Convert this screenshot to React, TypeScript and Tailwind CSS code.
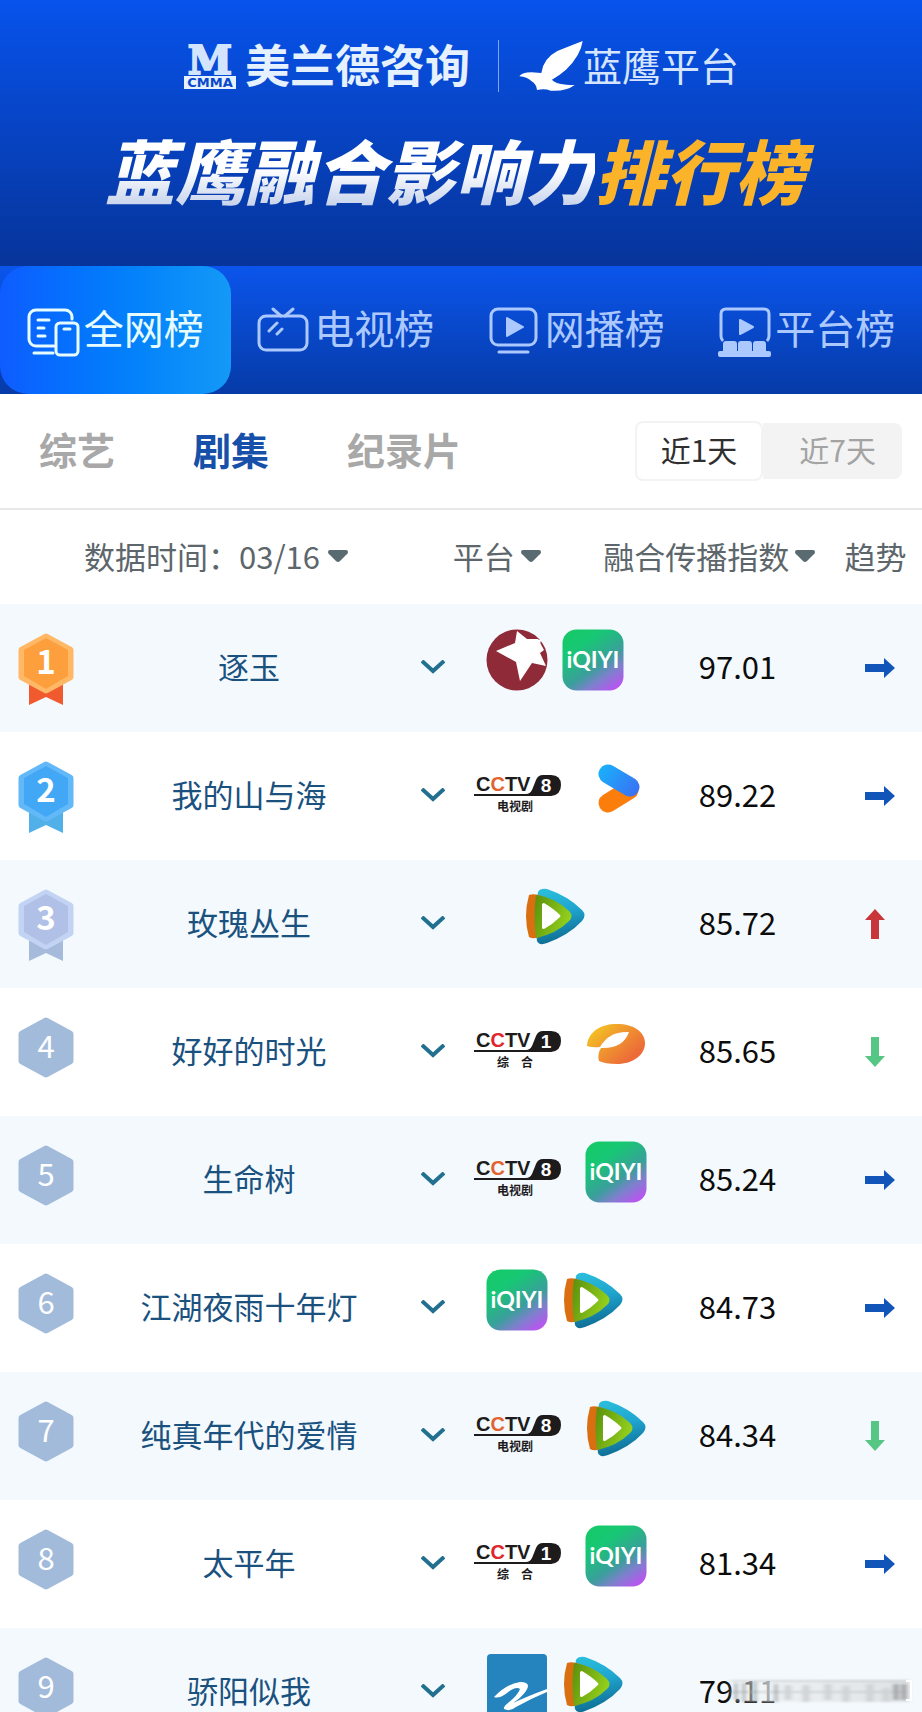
import { useState } from "react";
import type { ReactNode } from "react";
import clsx from "clsx";

type Platform = "dragon" | "iqiyi" | "cctv8" | "cctv1" | "youku" | "tencent" | "hunan" | "zhejiang";
type Trend = "flat" | "up" | "down";

interface Show {
  title: string;
  platforms: Platform[];
  score: string;
  trend?: Trend;
}

const SHOWS: Show[] = [
  { title: "逐玉", platforms: ["dragon", "iqiyi"], score: "97.01", trend: "flat" },
  { title: "我的山与海", platforms: ["cctv8", "youku"], score: "89.22", trend: "flat" },
  { title: "玫瑰丛生", platforms: ["tencent"], score: "85.72", trend: "up" },
  { title: "好好的时光", platforms: ["cctv1", "hunan"], score: "85.65", trend: "down" },
  { title: "生命树", platforms: ["cctv8", "iqiyi"], score: "85.24", trend: "flat" },
  { title: "江湖夜雨十年灯", platforms: ["iqiyi", "tencent"], score: "84.73", trend: "flat" },
  { title: "纯真年代的爱情", platforms: ["cctv8", "tencent"], score: "84.34", trend: "down" },
  { title: "太平年", platforms: ["cctv1", "iqiyi"], score: "81.34", trend: "flat" },
  { title: "骄阳似我", platforms: ["zhejiang", "tencent"], score: "79.11" },
];

/* ---------- brand ---------- */

function CmmaLogo() {
  return (
    <svg width="54" height="60" viewBox="0 -8 54 60" aria-hidden="true">
      <text
        x="27"
        y="30"
        textAnchor="middle"
        fontFamily="DejaVu Serif, serif"
        fontWeight="700"
        fontSize="40"
        fill="#d3e4ff"
        stroke="#d3e4ff"
        strokeWidth="2"
      >
        M
      </text>
      <rect x="1" y="32" width="52" height="13" fill="#e6f1ff" />
      <text x="27" y="43" textAnchor="middle" fontFamily="DejaVu Sans, sans-serif" fontWeight="700" fontSize="13" fill="#0a48cb">
        CMMA
      </text>
    </svg>
  );
}

function EagleLogo() {
  return (
    <svg width="64" height="52" viewBox="55 45 192 156" aria-hidden="true">
      <path
        d="M56 154Q64 142 92 142L122 144Q128 100 170 78Q205 64 246 48Q240 92 196 134Q178 150 154 164Q166 180 222 180Q196 200 150 197Q132 190 109 195Q108 178 92 168Q80 156 56 154Z"
        fill="#fff"
      />
    </svg>
  );
}

/* ---------- tab icons ---------- */

function AllIcon() {
  return (
    <svg width="53" height="50" viewBox="0 0 53 50" fill="none" stroke="currentColor" strokeWidth="3" strokeLinecap="round" aria-hidden="true">
      <path d="M45 12V10a7 7 0 0 0-7-7H9a7 7 0 0 0-7 7v22a7 7 0 0 0 7 7h18" />
      <path d="M11 13h11M11 21h6M11 29h7M7 46h19" />
      <rect x="29" y="16" width="22" height="32" rx="4" />
      <path d="M37 22h6" />
    </svg>
  );
}

function TvIcon() {
  return (
    <svg width="53" height="50" viewBox="0 0 53 50" fill="none" stroke="currentColor" strokeWidth="3" strokeLinecap="round" aria-hidden="true">
      <rect x="2" y="9" width="48" height="34" rx="7" />
      <path d="M16 2l8 7M36 2l-8 7M12 24l8-8M20 27l5-5" />
    </svg>
  );
}

function WebIcon() {
  return (
    <svg width="53" height="50" viewBox="0 0 53 50" fill="none" stroke="currentColor" strokeWidth="3" strokeLinecap="round" aria-hidden="true">
      <rect x="3" y="2" width="45" height="36" rx="7" />
      <path d="M11 45h29" />
      <path d="M19 11v18l16-9z" fill="currentColor" strokeWidth="2" strokeLinejoin="round" />
    </svg>
  );
}

function StageIcon() {
  return (
    <svg width="53" height="50" viewBox="0 0 53 50" fill="none" stroke="currentColor" strokeWidth="3" aria-hidden="true">
      <path d="M5 34q-2-2-2-5V7q0-5 5-5h38q5 0 5 5v22q0 3-2 5" />
      <path d="M22 13v14l13-7z" fill="currentColor" strokeWidth="2" strokeLinejoin="round" />
      <g fill="currentColor" stroke="none">
        <path d="M5 46V37q0-3 3-3h8q3 0 3 3v9zM20 46V37q0-3 3-3h8q3 0 3 3v9zM35 46V37q0-3 3-3h7q3 0 3 3v9z" />
        <rect x="0" y="44" width="53" height="6" rx="2" />
      </g>
    </svg>
  );
}

/* ---------- platform logos ---------- */

function DragonLogo() {
  return (
    <svg width="62" height="62" viewBox="0 0 62 62" role="img" aria-label="东方卫视">
      <circle cx="31" cy="31" r="30.5" fill="#8f2b38" />
      <path d="M31 2L41 10L55 11Q53 18 54 24L60 37L46 34L34 52L30 33L10 22L29 14Z" fill="#fff" />
      <path d="M41 10L52 10L58 21L54 24Z" fill="#fff" />
    </svg>
  );
}

function IqiyiLogo() {
  return (
    <svg width="62" height="62" viewBox="0 0 62 62" role="img" aria-label="爱奇艺">
      <defs>
        <linearGradient id="iqiyi" x1="0.15" y1="0" x2="0.85" y2="1">
          <stop offset="0" stopColor="#16c968" />
          <stop offset="0.25" stopColor="#17c774" />
          <stop offset="0.6" stopColor="#3a9f9b" />
          <stop offset="0.78" stopColor="#7f7fce" />
          <stop offset="1" stopColor="#bd52f2" />
        </linearGradient>
      </defs>
      <rect x="0.5" y="0.5" width="61" height="61" rx="14" fill="url(#iqiyi)" />
      <text x="31" y="39" textAnchor="middle" fontFamily="Lato, sans-serif" fontWeight="700" fontSize="23" fill="#fff">
        iQIYI
      </text>
    </svg>
  );
}

function CctvLogo({ channel, name, accent }: { channel: string; name: string; accent: string }) {
  return (
    <svg width="108" height="62" viewBox="0 0 108 62" role="img" aria-label={`CCTV-${channel} ${name}`}>
      <text x="13" y="34" fontFamily="Liberation Sans, sans-serif" fontWeight="700" fontSize="20" fill="#1d1b1c">
        C<tspan fill={accent}>C</tspan>TV
      </text>
      <path d="M11 39V37H63Q67 37 69 33L73 23Q75 18 80 18H88Q98 18 98 28T88 39Z" fill="#1d1b1c" />
      <text x="83" y="35" textAnchor="middle" fontFamily="Liberation Sans, sans-serif" fontWeight="700" fontSize="19" fill="#fff">
        {channel}
      </text>
      <text x="52" y="54" textAnchor="middle" fontFamily="Noto Sans CJK SC, sans-serif" fontWeight="700" fontSize="12" fill="#1d1b1c">
        {name}
      </text>
    </svg>
  );
}

function YoukuLogo() {
  return (
    <svg width="62" height="62" viewBox="0 0 62 62" fill="none" strokeWidth="19" strokeLinecap="round" role="img" aria-label="优酷">
      <defs>
        <linearGradient id="youku" gradientUnits="userSpaceOnUse" x1="12" y1="10" x2="50" y2="38">
          <stop offset="0" stopColor="#16b5fb" />
          <stop offset="1" stopColor="#3a72f4" />
        </linearGradient>
      </defs>
      <path d="M23 46L44 33" stroke="#fb7d0c" />
      <path d="M23 17L45 30" stroke="url(#youku)" />
    </svg>
  );
}

function TencentLogo() {
  return (
    <svg width="62" height="62" viewBox="0 0 62 62" role="img" aria-label="腾讯视频">
      <defs>
        <linearGradient id="txBlue" x1="0" y1="0" x2="0.2" y2="1">
          <stop offset="0" stopColor="#2cc0dc" />
          <stop offset="0.5" stopColor="#1fa5cf" />
          <stop offset="1" stopColor="#0f6e95" />
        </linearGradient>
        <linearGradient id="txGreen" x1="0" y1="0" x2="1" y2="0.4">
          <stop offset="0" stopColor="#5a8f0c" />
          <stop offset="1" stopColor="#93cf1d" />
        </linearGradient>
      </defs>
      <path d="M14 7Q16 3 23 4Q44 11 58 25Q63 30 58 36Q45 50 23 58Q15 61 13 56Q9 31 14 7Z" fill="url(#txBlue)" />
      <path d="M5 10Q10 8 18 11V51Q10 55 5 52Q-1 31 5 10Z" fill="#d96f10" />
      <path d="M12 10Q30 12 45 26Q50 31 45 36Q32 49 12 53Q9 31 12 10Z" fill="url(#txGreen)" />
      <path d="M18 19Q19 18 20 18Q30 24 36 30Q37 31 36 32Q29 39 20 44Q18 44 18 43Z" fill="#fff" />
    </svg>
  );
}

function HunanLogo() {
  return (
    <svg width="62" height="62" viewBox="0 0 62 62" role="img" aria-label="湖南卫视">
      <defs>
        <linearGradient id="hunan" x1="0" y1="0.2" x2="0.8" y2="0.8">
          <stop offset="0" stopColor="#f3c622" />
          <stop offset="0.45" stopColor="#f09a2e" />
          <stop offset="1" stopColor="#ec6b38" />
        </linearGradient>
      </defs>
      <path
        d="M2 33C3 19 15 11 32 11C49 11 60 19 60 30C60 42 48 51 32 51Q20 51 14 48Q12 41 16 35Q38 36 44 19Q24 18 15 34Q8 35 2 33Z"
        fill="url(#hunan)"
      />
    </svg>
  );
}

function ZhejiangLogo() {
  return (
    <svg width="62" height="62" viewBox="0 0 62 62" role="img" aria-label="浙江卫视">
      <rect x="1" y="1" width="60" height="61" rx="4" fill="#2583bd" />
      <path
        d="M8 44Q20 31 34 29Q46 29 40 38Q35 45 27 50Q42 43 61 36V39Q44 46 30 54Q24 59 18 56Q17 54 22 50Q32 42 34 36Q30 33 21 40Q13 46 8 44Z"
        fill="#fff"
      />
    </svg>
  );
}

const LOGOS: Record<Platform, ReactNode> = {
  dragon: <DragonLogo />,
  iqiyi: <IqiyiLogo />,
  cctv8: <CctvLogo channel="8" name="电视剧" accent="#e2632f" />,
  cctv1: <CctvLogo channel="1" name="综　合" accent="#e0252b" />,
  youku: <YoukuLogo />,
  tencent: <TencentLogo />,
  hunan: <HunanLogo />,
  zhejiang: <ZhejiangLogo />,
};

/* ---------- table bits ---------- */

const MEDALS = [
  { rim: "#ffb866", face: "#fd9f3c", ribbon: "#f15a2f" },
  { rim: "#63b9f8", face: "#42a8f6", ribbon: "#52b0e8" },
  { rim: "#c3d3f3", face: "#b1c0e6", ribbon: "#a6bbdc" },
];

function RankBadge({ rank }: { rank: number }) {
  const medal = MEDALS[rank - 1];
  return (
    <svg width="56" height="76" viewBox="0 0 56 76" role="img" aria-label={`第${rank}名`}>
      {medal && <path d="M11 44H45V73L28 65L11 73Z" fill={medal.ribbon} />}
      <path
        d="M28 5L52 18V45L28 58L4 45V18Z"
        fill={medal ? medal.rim : "#a3bbdb"}
        stroke={medal ? medal.rim : "#a3bbdb"}
        strokeWidth="7"
        strokeLinejoin="round"
      />
      {medal && <path d="M28 6L50 18V44L28 57L6 44V18Z" fill={medal.face} />}
      <text
        x="28"
        y={medal ? 42 : 42}
        textAnchor="middle"
        fontFamily="Noto Sans CJK SC, sans-serif"
        fontWeight={medal ? 700 : 400}
        fontSize={medal ? 33 : 31}
        fill="#fff"
      >
        {rank}
      </text>
    </svg>
  );
}

function TrendArrow({ trend }: { trend: Trend }) {
  if (trend === "flat") {
    return (
      <svg width="30" height="20" viewBox="0 0 30 20" role="img" aria-label="持平">
        <path d="M0 6H19V0L30 10L19 20V14H0Z" fill="#1155b9" />
      </svg>
    );
  }
  if (trend === "up") {
    return (
      <svg width="20" height="30" viewBox="0 0 20 30" role="img" aria-label="上升">
        <path d="M6 30V11H0L10 0L20 11H14V30Z" fill="#c9363a" />
      </svg>
    );
  }
  return (
    <svg width="20" height="30" viewBox="0 0 20 30" role="img" aria-label="下降">
      <path d="M6 0V19H0L10 30L20 19H14V0Z" fill="#55c683" />
    </svg>
  );
}

function Caret() {
  return (
    <svg width="20" height="12" viewBox="0 0 20 12" className="shrink-0" aria-hidden="true">
      <path d="M2 0H18Q20 0 20 2Q20 4 18 5L12 11Q10 13 8 11L2 5Q0 4 0 2Q0 0 2 0Z" fill="#5a6a71" />
    </svg>
  );
}

// Smudged account mark in the lower right corner
function Watermark() {
  return (
    <svg width="192" height="32" viewBox="0 0 192 32" className="pointer-events-none absolute right-2 bottom-1" aria-hidden="true">
      <defs>
        <linearGradient id="fade" x1="0" x2="1">
          <stop offset="0" stopColor="#f3f9fd" stopOpacity="0.2" />
          <stop offset="0.3" stopColor="#eceff1" stopOpacity="0.9" />
          <stop offset="1" stopColor="#dfe2e4" />
        </linearGradient>
        <filter id="smudge" x="-5%" y="-20%" width="110%" height="140%">
          <feGaussianBlur stdDeviation="2 1" />
        </filter>
      </defs>
      <g filter="url(#smudge)">
        <rect x="8" y="4" width="180" height="22" fill="url(#fade)" />
        <path d="M8 5H186M8 16H186" stroke="#b9bdbf" />
        <path d="M14 7V24M22 7V26M33 6V26M54 8V26" stroke="#55585a" strokeWidth="2" />
        <path d="M66 9V24M84 9V26M106 8V24M124 10V26M148 8V26M164 12V26" stroke="#cfd3d5" strokeWidth="7" />
        <path d="M174 8V24M182 8V24" stroke="#9a9ea0" strokeWidth="5" />
      </g>
      <path d="M184 5H189V24H184" fill="none" stroke="#fff" strokeWidth="2" />
    </svg>
  );
}

const TABS = [
  { label: "全网榜", icon: <AllIcon /> },
  { label: "电视榜", icon: <TvIcon /> },
  { label: "网播榜", icon: <WebIcon /> },
  { label: "平台榜", icon: <StageIcon /> },
];

const CATEGORIES = ["综艺", "剧集", "纪录片"];

export default function App() {
  const [tab, setTab] = useState("全网榜");
  const [category, setCategory] = useState("剧集");
  const [days, setDays] = useState(1);

  return (
    <div className="relative flex h-screen flex-col overflow-hidden bg-white font-['Noto_Sans_CJK_SC',sans-serif]">
      <header className="flex h-[266px] shrink-0 flex-col items-center bg-linear-to-b from-[#0753ec] to-[#06349a] pt-9">
        <div className="flex h-[60px] items-center whitespace-nowrap">
          <CmmaLogo />
          <span className="ml-2 pb-1 text-[45px] leading-[60px] font-bold text-[#e6f1ff]">美兰德咨询</span>
          <span className="mr-5 ml-7 h-[52px] w-px bg-[#7fa6f5]" />
          <EagleLogo />
          <span className="pb-1 text-[39px] leading-[60px] font-normal text-[#d5e5ff]">蓝鹰平台</span>
        </div>
        <h1 className="mt-7 pr-3 text-[70px] leading-[90px] font-black whitespace-nowrap italic">
          <span className="bg-linear-to-b from-white from-50% to-[#c3d0ea] to-90% bg-clip-text text-transparent">蓝鹰融合影响力</span>
          <span className="text-[#fbb42a]">排行榜</span>
        </h1>
      </header>

      <nav className="grid h-32 shrink-0 grid-cols-4 bg-linear-to-b from-[#0b55ec] to-[#063ba8]">
        {TABS.map((t) => (
          <button
            key={t.label}
            type="button"
            onClick={() => setTab(t.label)}
            className={clsx(
              "flex items-center justify-center gap-1 rounded-[28px] pb-1 text-[40px] leading-[60px] whitespace-nowrap",
              tab === t.label ? "bg-linear-to-r from-[#0f5cff] to-[#1499f7] text-[#e6fcff]" : "text-[#abc8ff]",
            )}
          >
            <span className="shrink-0 pt-2">{t.icon}</span>
            <span className="pb-0.5">{t.label}</span>
          </button>
        ))}
      </nav>

      <div className="flex h-[116px] shrink-0 items-center justify-between border-b-2 border-[#e6e7e8] pr-5 pl-[39px]">
        <div className="flex gap-[78px] pb-1">
          {CATEGORIES.map((c) => (
            <button
              key={c}
              type="button"
              onClick={() => setCategory(c)}
              className={clsx(
                "text-[38px] leading-[56px] font-bold whitespace-nowrap",
                category === c ? "text-[#1650a8]" : "text-[#a8a8a8]",
              )}
            >
              {c}
            </button>
          ))}
        </div>
        <div className="flex items-center text-[30px] leading-[40px] whitespace-nowrap">
          <button
            type="button"
            onClick={() => setDays(1)}
            className={clsx(
              "h-[60px] rounded-lg border-2 border-[#f3f3f3] px-6 pb-1",
              days === 1 ? "bg-white text-[#2f2f2f]" : "bg-[#f3f3f3] text-[#a3a3a3]",
            )}
          >
            近1天
          </button>
          <button
            type="button"
            onClick={() => setDays(7)}
            className={clsx(
              "h-[56px] rounded-r-lg pr-[26px] pb-1 pl-9",
              days === 7 ? "bg-white text-[#2f2f2f]" : "bg-[#f3f3f3] text-[#a3a3a3]",
            )}
          >
            近7天
          </button>
        </div>
      </div>

      <main className="min-h-0 flex-1 overflow-y-auto [scrollbar-width:none]">
        <table className="w-full table-fixed text-[31px] leading-[44px]">
          <colgroup>
            <col className="w-[10%]" />
            <col className="w-[34%]" />
            <col className="w-[6%]" />
            <col className="w-[20.5%]" />
            <col className="w-[19%]" />
            <col className="w-[10.5%]" />
          </colgroup>
          <thead>
            <tr className="h-[94px] text-[#5c666b]">
              <th colSpan={2} className="pb-0.5 pl-[84px] font-normal whitespace-nowrap">
                <label className="flex items-center">
                  数据时间：
                  <select className="mr-2 appearance-none" defaultValue="03/16">
                    <option>03/16</option>
                    <option>03/15</option>
                    <option>03/14</option>
                  </select>
                  <Caret />
                </label>
              </th>
              <th colSpan={2} className="pb-0.5 pl-[47px] font-normal whitespace-nowrap">
                <button type="button" className="flex items-center gap-1.5">
                  平台
                  <Caret />
                </button>
              </th>
              <th className="pr-[10px] pb-0.5 font-normal whitespace-nowrap">
                <div className="flex justify-end">
                  <button type="button" className="flex items-center gap-1.5">
                    融合传播指数
                    <Caret />
                  </button>
                </div>
              </th>
              <th className="pb-0.5 pl-1 font-normal">趋势</th>
            </tr>
          </thead>
          <tbody>
            {SHOWS.map((show, i) => (
              <tr key={show.title} className="h-32 odd:bg-[#f3f9fd]">
                <td className="pt-1">
                  <div className="flex justify-center">
                    <RankBadge rank={i + 1} />
                  </div>
                </td>
                <td className="pb-1 text-center whitespace-nowrap text-[#1a517f]">{show.title}</td>
                <td className="pb-0.5">
                  <button type="button" className="mx-auto flex h-11 w-11 items-center justify-center" aria-label={`展开${show.title}`}>
                    <svg width="24" height="14" viewBox="0 0 24 14" fill="none" stroke="#21708f" strokeWidth="4" aria-hidden="true">
                      <path d="M1 1L12 11L23 1" />
                    </svg>
                  </button>
                </td>
                <td className="pb-4">
                  <div className="flex justify-center gap-[14px]">
                    {show.platforms.map((p) => (
                      <span key={p} className="shrink-0">
                        {LOGOS[p]}
                      </span>
                    ))}
                  </div>
                </td>
                <td className="pb-1 text-center text-[#0c0c0c]">{show.score}</td>
                <td className="pl-10">{show.trend && <TrendArrow trend={show.trend} />}</td>
              </tr>
            ))}
          </tbody>
        </table>
      </main>

      <Watermark />
    </div>
  );
}
